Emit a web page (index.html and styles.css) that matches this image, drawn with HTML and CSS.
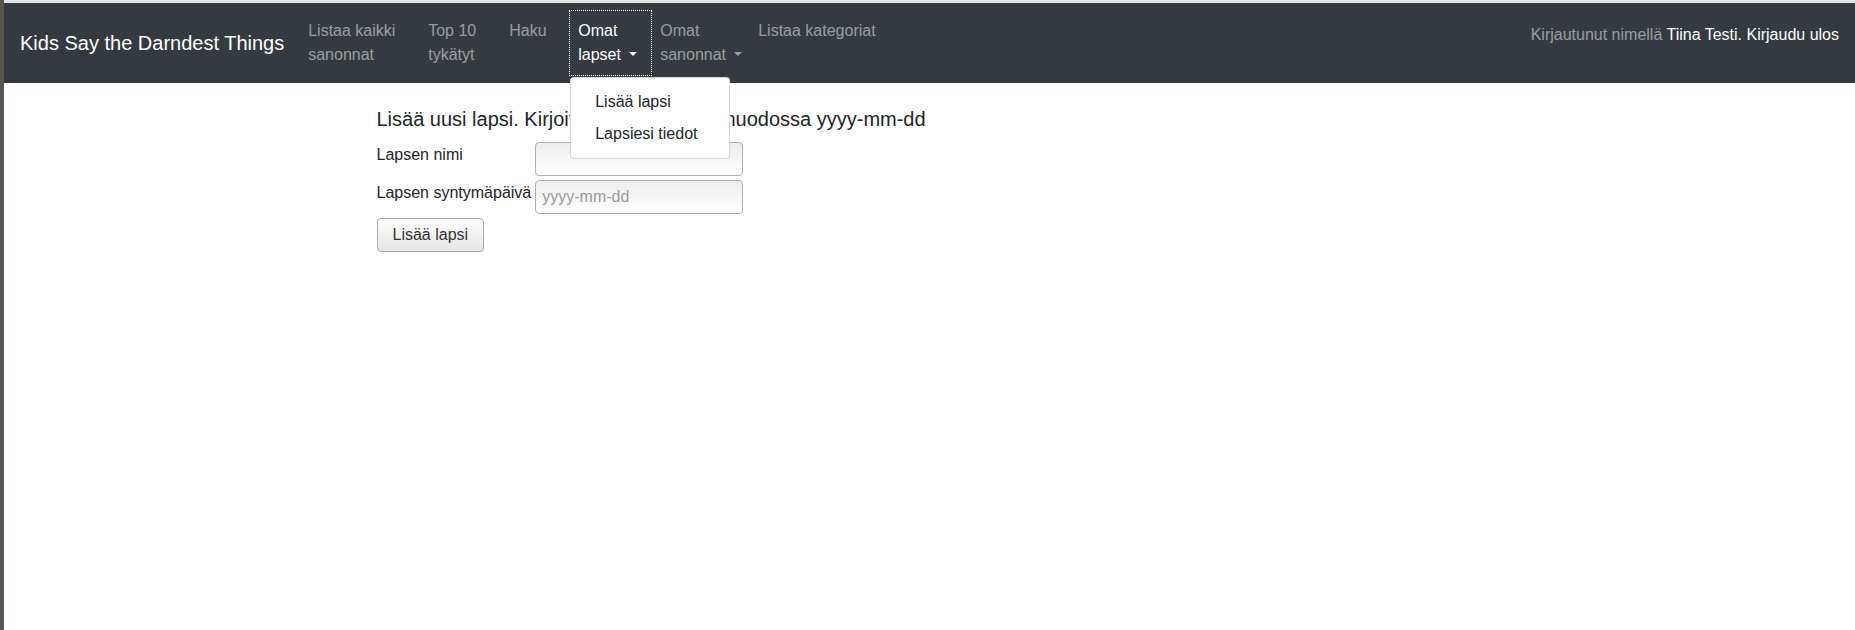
FILE: index.html
```html
<!DOCTYPE html>
<html lang="fi">
<head>
<meta charset="utf-8">
<title>Kids Say the Darndest Things</title>
<link rel="stylesheet" href="styles.css">
</head>
<body>
<div class="frame">
  <div class="topline"></div>
  <nav class="navbar">
    <a class="brand" href="#">Kids Say the Darndest Things</a>
    <ul class="nav">
      <li class="nav-item"><a class="nav-link w1" href="#">Listaa kaikki sanonnat</a></li>
      <li class="nav-item"><a class="nav-link w2" href="#">Top 10 tykätyt</a></li>
      <li class="nav-item"><a class="nav-link w3" href="#">Haku</a></li>
      <li class="nav-item dropdown">
        <a class="nav-link w4 toggle focused" href="#">Omat lapset</a>
        <div class="dropdown-menu">
          <a class="dropdown-item" href="#">Lisää lapsi</a>
          <a class="dropdown-item" href="#">Lapsiesi tiedot</a>
        </div>
      </li>
      <li class="nav-item"><a class="nav-link w5 toggle" href="#">Omat sanonnat</a></li>
      <li class="nav-item"><a class="nav-link" href="#">Listaa kategoriat</a></li>
    </ul>
    <span class="navbar-text">Kirjautunut nimellä <a class="white" href="#">Tiina Testi.</a> <a class="white" href="#">Kirjaudu ulos</a></span>
  </nav>
  <main class="container">
    <h5 class="title">Lisää uusi lapsi. Kirjoita syntymäpäivä muodossa yyyy-mm-dd</h5>
    <form>
      <table class="form-table">
        <tr>
          <td><label>Lapsen nimi</label></td>
          <td><input class="field" type="text"></td>
        </tr>
        <tr>
          <td><label>Lapsen syntymäpäivä</label></td>
          <td><input class="field" type="text" placeholder="yyyy-mm-dd"></td>
        </tr>
        <tr>
          <td><button class="btn" type="button">Lisää lapsi</button></td>
          <td></td>
        </tr>
      </table>
    </form>
  </main>
</div>
</body>
</html>
```

FILE: styles.css
```css
html, body {
  margin: 0;
  padding: 0;
  background: #fff;
}

body {
  font-family: "Liberation Sans", Arial, sans-serif;
  font-size: 16px;
  line-height: 24px;
  color: #212529;
}

a {
  text-decoration: none;
}

.frame {
  border-left: 4px solid #58554f;
  min-height: 630px;
  box-sizing: border-box;
}

.topline {
  height: 3px;
  background: #e4e4e4;
}

.navbar {
  display: flex;
  align-items: center;
  height: 80px;
  box-sizing: border-box;
  padding: 8px 16px;
  background: #343a40;
}

.brand {
  color: #fff;
  font-size: 20px;
  line-height: 30px;
  margin-right: 16px;
  white-space: nowrap;
}

.nav {
  display: flex;
  align-self: flex-start;
  list-style: none;
  margin: 0;
  padding: 0;
}

.nav-item {
  position: relative;
}

.nav-link {
  display: block;
  padding: 8px;
  color: rgba(255, 255, 255, 0.5);
  white-space: nowrap;
}

.w1, .w2, .w3, .w4, .w5 {
  white-space: normal;
}

.w1 { width: 104px; }
.w2 { width: 65px; }
.w3 { width: 53px; }
.w4 { width: 65px; }
.w5 { width: 82px; }

.toggle::after {
  content: "";
  display: inline-block;
  margin-left: 8px;
  vertical-align: 4px;
  border-top: 4.5px solid;
  border-left: 4.5px solid transparent;
  border-right: 4.5px solid transparent;
}

.focused {
  color: #fff;
  outline: 1px dotted #fff;
  margin-right: 1px;
}

.dropdown-menu {
  position: absolute;
  top: 100%;
  left: 0;
  z-index: 10;
  margin-top: 2px;
  min-width: 160px;
  box-sizing: border-box;
  padding: 8px 0;
  background: #fff;
  border: 1px solid rgba(0, 0, 0, 0.15);
  border-radius: 4px;
}

.dropdown-item {
  display: block;
  padding: 4px 24px;
  color: #212529;
  white-space: nowrap;
}

.navbar-text {
  margin-left: auto;
  align-self: flex-start;
  padding-top: 12px;
  color: rgba(255, 255, 255, 0.5);
  white-space: nowrap;
}

.white {
  color: #fff;
}

.container {
  box-sizing: border-box;
  max-width: 1140px;
  margin: 24px auto 0;
  padding: 0 15px 0 17px;
}

.title {
  font-size: 20px;
  line-height: 24px;
  font-weight: 400;
  margin: 0 0 8px;
}

.form-table {
  border-spacing: 2px;
  margin-left: -3px;
}

.form-table td {
  padding: 1px;
  vertical-align: middle;
}

.form-table label {
  display: inline-block;
  margin-bottom: 8px;
}

.field {
  display: block;
  width: 208px;
  height: 34px;
  box-sizing: border-box;
  padding: 0 6px;
  border: 1px solid #b0b0b0;
  border-radius: 4px;
  background: linear-gradient(#ededed, #fff);
  font-family: "Liberation Sans", Arial, sans-serif;
  font-size: 16px;
  color: #212529;
}

.field::placeholder {
  color: #999;
}

.btn {
  display: block;
  height: 34px;
  box-sizing: border-box;
  padding: 0 15px;
  border: 1px solid #aaa;
  border-radius: 4px;
  background: linear-gradient(#fdfdfd, #e6e6e6);
  font-family: "Liberation Sans", Arial, sans-serif;
  font-size: 16px;
  color: #333;
}
```
